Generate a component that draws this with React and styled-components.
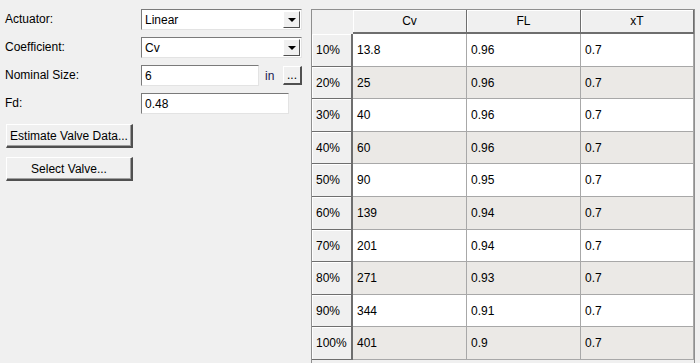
import React from 'react';
import styled, { createGlobalStyle } from 'styled-components';

const GlobalStyle = createGlobalStyle`
    html, body {
        margin: 0;
        padding: 0;
        background: #f0f0f0;
    }
    body {
        font-family: "Liberation Sans", Arial, sans-serif;
        font-size: 12px;
        color: #000;
    }
`;

const Window = styled.div`
    display: flex;
    width: 700px;
    height: 363px;
    overflow: hidden;
    background: #f0f0f0;
`;

const LeftPanel = styled.div`
    width: 311px;
    flex-shrink: 0;
    padding: 9px 0 0 5px;
    box-sizing: border-box;
    display: flex;
    flex-direction: column;
`;

const Form = styled.div`
    display: grid;
    grid-template-columns: 136px 1fr;
    grid-auto-rows: 21px;
    row-gap: 7px;
    align-items: center;
`;

const Label = styled.div`
    line-height: 21px;
    white-space: nowrap;
`;

const Sunken = styled.div`
    box-sizing: border-box;
    height: 21px;
    width: ${p => p.$width}px;
    background: #fff;
    border-top: 1px solid #7a7a7a;
    border-left: 1px solid #7a7a7a;
    border-right: 1px solid #e3e3e3;
    border-bottom: 1px solid #e3e3e3;
    display: flex;
    align-items: center;
    padding-left: 3px;
    position: relative;
`;

const Value = styled.span`
    flex: 1;
    font-family: ${p => (p.$mono ? '"DejaVu Sans Mono", monospace' : 'inherit')};
    font-size: ${p => (p.$mono ? '11px' : '12px')};
`;

const DropButton = styled.div`
    box-sizing: border-box;
    width: 17px;
    height: 17px;
    margin-right: 1px;
    background: #f0f0f0;
    border-top: 1px solid #fff;
    border-left: 1px solid #fff;
    border-right: 1px solid #505050;
    border-bottom: 1px solid #505050;
    display: flex;
    align-items: center;
    justify-content: center;
`;

const Arrow = styled.div`
    width: 0;
    height: 0;
    border-left: 4px solid transparent;
    border-right: 4px solid transparent;
    border-top: 4px solid #000;
`;

const FieldRow = styled.div`
    display: flex;
    align-items: center;
`;

const Unit = styled.span`
    margin-left: 6px;
    width: 18px;
    color: #1a1a50;
`;

const SmallButton = styled.div`
    box-sizing: border-box;
    width: 19px;
    height: 19px;
    background: #f0f0f0;
    border-top: 1px solid #fff;
    border-left: 1px solid #fff;
    border-right: 2px solid #505050;
    border-bottom: 2px solid #505050;
    display: flex;
    align-items: flex-end;
    justify-content: center;
    line-height: 12px;
    padding-bottom: 2px;
    font-size: 12px;
`;

const Buttons = styled.div`
    display: flex;
    flex-direction: column;
    gap: 9px;
    margin-top: 10px;
    margin-left: 1px;
`;

const PushButton = styled.div`
    box-sizing: border-box;
    width: 127px;
    height: 24px;
    background: #f0f0f0;
    border-top: 1px solid #fff;
    border-left: 1px solid #fff;
    border-right: 2px solid #505050;
    border-bottom: 2px solid #505050;
    box-shadow: inset -1px -1px 0 #a0a0a0;
    display: flex;
    align-items: center;
    justify-content: center;
    white-space: nowrap;
`;

const TablePanel = styled.div`
    margin-top: 9px;
    width: 384px;
    flex-shrink: 0;
    box-sizing: border-box;
    border-left: 1px solid #8f8f8f;
    border-top: 1px solid #8f8f8f;
    border-right: 1px solid #8f8f8f;
    background: #f0f0f0;
`;

const Grid = styled.div`
    display: grid;
    grid-template-columns: 41px 114px 114px 113px;
    grid-template-rows: 24px 33px 32px 33px 32px 33px 33px 32px 33px 32px 33px;
`;

const Corner = styled.div`
    background: #f0f0f0;
`;

const ColHead = styled.div`
    box-sizing: border-box;
    background: #f0f0f0;
    border-right: 1px solid #6e6e6e;
    border-bottom: 2px solid #6e6e6e;
    box-shadow: inset 1px 1px 0 #fff;
    display: flex;
    align-items: center;
    justify-content: center;
`;

const RowHead = styled.div`
    box-sizing: border-box;
    background: #f0f0f0;
    border-right: 2px solid #6e6e6e;
    border-bottom: 1px solid #6e6e6e;
    box-shadow: inset 1px 1px 0 #fff;
    display: flex;
    align-items: center;
    padding-left: 4px;
`;

const Cell = styled.div`
    box-sizing: border-box;
    background: ${p => (p.$alt ? '#ebe9e6' : '#fff')};
    border-right: 1px solid #a8a8a8;
    border-bottom: 1px solid #a8a8a8;
    display: flex;
    align-items: center;
    padding-left: 4px;
`;

const rows = [
    ['10%', '13.8', '0.96', '0.7'],
    ['20%', '25', '0.96', '0.7'],
    ['30%', '40', '0.96', '0.7'],
    ['40%', '60', '0.96', '0.7'],
    ['50%', '90', '0.95', '0.7'],
    ['60%', '139', '0.94', '0.7'],
    ['70%', '201', '0.94', '0.7'],
    ['80%', '271', '0.93', '0.7'],
    ['90%', '344', '0.91', '0.7'],
    ['100%', '401', '0.9', '0.7'],
];

const Combo = ({ value }) => (
    <Sunken $width={161}>
        <Value>{value}</Value>
        <DropButton><Arrow /></DropButton>
    </Sunken>
);

const App = () => (
    <Window>
        <GlobalStyle />
        <LeftPanel>
            <Form>
                <Label>Actuator:</Label>
                <Combo value="Linear" />
                <Label>Coefficient:</Label>
                <Combo value="Cv" />
                <Label>Nominal Size:</Label>
                <FieldRow>
                    <Sunken $width={118}><Value>6</Value></Sunken>
                    <Unit>in</Unit>
                    <SmallButton>...</SmallButton>
                </FieldRow>
                <Label>Fd:</Label>
                <Sunken $width={148}><Value>0.48</Value></Sunken>
            </Form>
            <Buttons>
                <PushButton>Estimate Valve Data...</PushButton>
                <PushButton>Select Valve...</PushButton>
            </Buttons>
        </LeftPanel>
        <TablePanel>
            <Grid>
                <Corner />
                <ColHead>Cv</ColHead>
                <ColHead>FL</ColHead>
                <ColHead>xT</ColHead>
                {rows.map((r, i) => (
                    <React.Fragment key={r[0]}>
                        <RowHead>{r[0]}</RowHead>
                        <Cell $alt={i % 2 === 1}>{r[1]}</Cell>
                        <Cell $alt={i % 2 === 1}>{r[2]}</Cell>
                        <Cell $alt={i % 2 === 1}>{r[3]}</Cell>
                    </React.Fragment>
                ))}
            </Grid>
        </TablePanel>
    </Window>
);

export default App;
